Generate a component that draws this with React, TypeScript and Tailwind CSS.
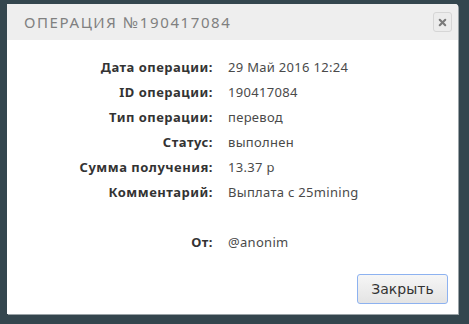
import { X } from "lucide-react";

const rows = [
    { label: "Дата операции:", value: "29 Май 2016 12:24" },
    { label: "ID операции:", value: "190417084" },
    { label: "Тип операции:", value: "перевод" },
    { label: "Статус:", value: "выполнен" },
    { label: "Сумма получения:", value: "13.37 р" },
    { label: "Комментарий:", value: "Выплата с 25mining" },
    { label: "", value: "" },
    { label: "От:", value: "@anonim" },
];

export default function App() {
    return (
        <div className="h-[324px] w-[469px] overflow-hidden bg-[#34464e] pl-[7px] pt-[4px]">
            <div className="flex h-[310px] w-[451px] flex-col rounded-tr-[3px] bg-white shadow-[1px_1px_0_#9aa3a7]">
                <div className="flex h-[36px] items-center justify-between rounded-tr-[3px] bg-[#eeeeee] pl-[17px] pr-[6px]">
                    <span className="text-[15px] tracking-[1.6px] text-[#808080] [font-family:'Noto_Sans',sans-serif]">
                        ОПЕРАЦИЯ №190417084
                    </span>
                    <button className="flex h-[20px] w-[19px] items-center justify-center rounded-[3px] border border-[#d6d6d6] bg-[#ececec]">
                        <X className="h-[11px] w-[11px] text-[#7a7a7a]" strokeWidth={4.5} />
                    </button>
                </div>
                <div className="flex flex-col pt-[15px] [font-family:'Noto_Sans',sans-serif] text-[13px]">
                    {rows.map((row, i) => (
                        <div key={i} className="flex h-[25px] items-center">
                            <div className="w-[206px] text-right font-bold tracking-[0.5px] text-[#333]">{row.label}</div>
                            <div className="pl-[15px] tracking-[0.3px] text-[#4a4a4a]">{row.value}</div>
                        </div>
                    ))}
                </div>
                <div className="mt-auto flex justify-end pb-[10px] pr-[10px]">
                    <button className="h-[30px] w-[91px] rounded-[3px] border border-[#8db2f0] bg-gradient-to-b from-[#f6f6f6] to-[#e4e4e4] text-[14px] text-[#333] [font-family:'DejaVu_Sans',sans-serif]">
                        Закрыть
                    </button>
                </div>
            </div>
        </div>
    );
}
